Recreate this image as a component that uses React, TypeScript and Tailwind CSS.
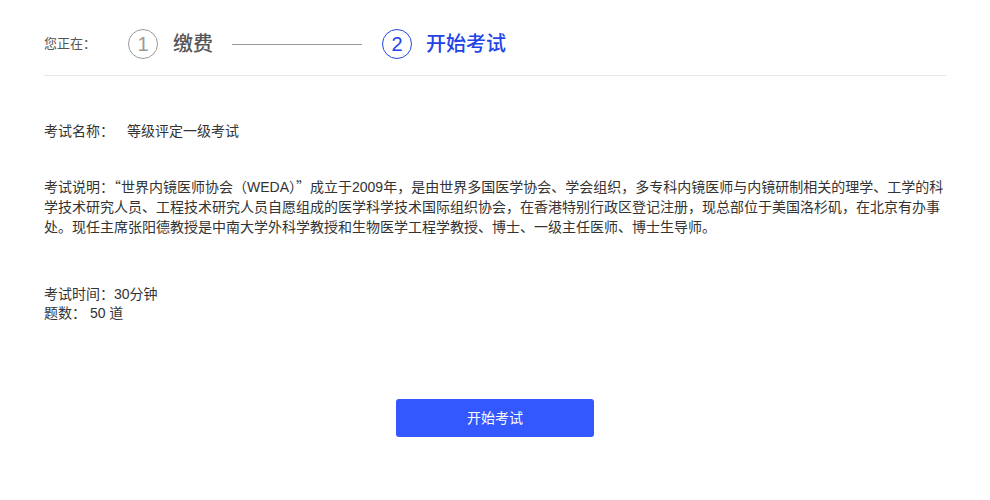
export default function App() {
  const q = "font-['Noto_Sans_CJK_SC',sans-serif]";
  return (
    <div className="w-[990px] h-[500px] bg-white px-[44px] text-[14px] text-[#333] font-['Liberation_Sans','Noto_Sans_CJK_SC',sans-serif]">
      <div className="flex items-center pt-[29px] pb-[16px] border-b border-[#e6e6e6]">
        <span className="text-[13px] text-[#555] w-[84px]">您正在：</span>
        <div className="flex items-center justify-center w-[30px] h-[30px] rounded-full border border-[#999] text-[20px] text-[#999] leading-none">
          1
        </div>
        <span className="ml-[15px] text-[20px] font-medium text-[#555]">缴费</span>
        <div className="ml-[19px] w-[130px] h-px bg-[#999]" />
        <div className="ml-[20px] flex items-center justify-center w-[30px] h-[30px] rounded-full border border-[#2344e6] text-[20px] text-[#2344e6] leading-none">
          2
        </div>
        <span className="ml-[14px] text-[20px] font-medium text-[#2344e6]">开始考试</span>
      </div>

      <div className="mt-[45px] flex leading-[20px]">
        <span>考试名称：</span>
        <span className="ml-[13px]">等级评定一级考试</span>
      </div>

      <p className="mt-[35px] leading-[20px] w-[902px]">
        考试说明：<span className={q}>“</span>世界内镜医师协会（WEDA）<span className={q}>”</span>成立于2009年，是由世界多国医学协会、学会组织，多专科内镜医师与内镜研制相关的理学、工学的科学技术研究人员、工程技术研究人员自愿组成的医学科学技术国际组织协会，在香港特别行政区登记注册，现总部位于美国洛杉矶，在北京有办事处。现任主席张阳德教授是中南大学外科学教授和生物医学工程学教授、博士、一级主任医师、博士生导师。
      </p>

      <div className="mt-[48px] leading-[19px]">
        <div>考试时间：30分钟</div>
        <div>题数：&nbsp;50 道</div>
      </div>

      <div className="mt-[76px] flex justify-center">
        <button className="w-[198px] h-[38px] rounded-[3px] bg-[#3358ff] text-white text-[14px]">
          开始考试
        </button>
      </div>
    </div>
  );
}
